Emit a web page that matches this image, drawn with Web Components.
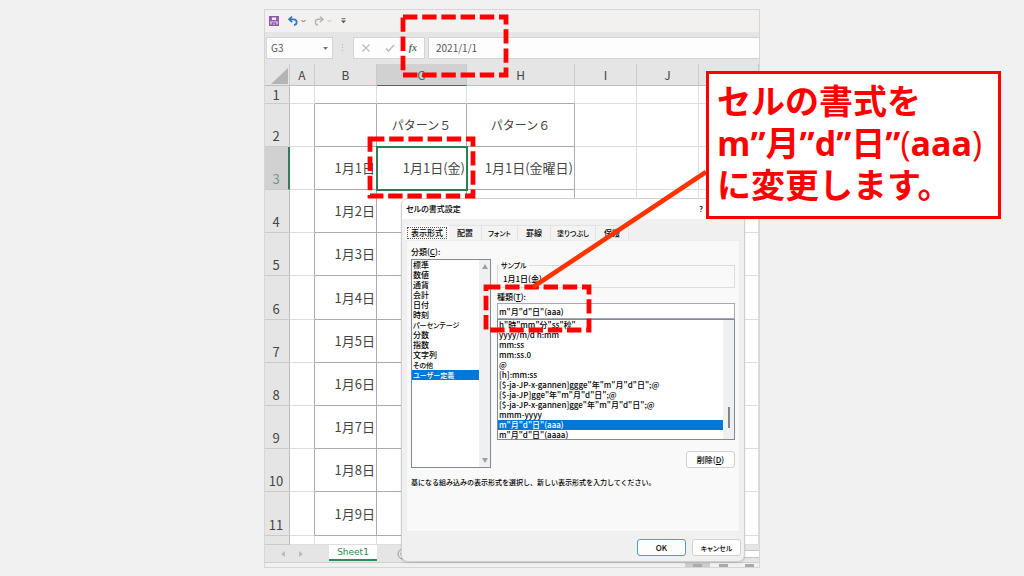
<!DOCTYPE html>
<html lang="ja">
<head>
<meta charset="utf-8">
<title>セルの書式設定</title>
<style>
  html, body { margin: 0; }
  body { background: #f1f1f1; color: #444; font: 13px/16px "Noto Sans CJK JP", sans-serif; }
</style>
</head>
<body>
<tutorial-slide>
  <xl-workbook>
    <xl-titlebar></xl-titlebar>
    <xl-formulabar cell="G3" value="2021/1/1"></xl-formulabar>
    <xl-grid></xl-grid>
    <xl-sheetbar></xl-sheetbar>
  </xl-workbook>
  <format-dialog slot="over"></format-dialog>
  <dash-mark slot="over" style="--x:137px;--y:6px;--w:107px;--h:62px"></dash-mark>
  <dash-mark slot="over" style="--x:104px;--y:128px;--w:107px;--h:61px"></dash-mark>
  <dash-mark slot="over" style="--x:220px;--y:276px;--w:107px;--h:47px"></dash-mark>
  <leader-line slot="over"></leader-line>
  <callout-box slot="over">セルの書式を<br>m”月”d”日”<span>(</span>aaa<span>)</span><br>に変更します。</callout-box>
</tutorial-slide>

<script>
const define = (name, html, setup) => customElements.define(name, class extends HTMLElement {
  constructor() {
    super();
    const t = document.createElement('template');
    t.innerHTML = '<style>*{box-sizing:border-box}</style>' + html;
    this.attachShadow({ mode: 'open' }).append(t.content.cloneNode(true));
  }
  connectedCallback() { if (setup) setup(this, this.shadowRoot); }
});

define('tutorial-slide', `
<style>
  :host { display: block; padding: 9px 264px 8px; overflow: hidden; }
  main { position: relative; min-width: 496px; }
</style>
<main><slot></slot><slot name="over"></slot></main>`);

define('xl-workbook', `
<style>
  :host { display: flex; flex-direction: column; border: 1px solid #d6d6d6; background: #e5e5e5; overflow: hidden; }
</style>
<slot></slot>`);

define('xl-titlebar', `
<style>
  :host { display: block; background: #f3f1ef; }
  div { display: flex; align-items: center; height: 22px; padding-left: 3px; }
  button { border: 0; padding: 0; background: none; display: flex; }
  .gap { margin-left: 7px; }
  .drop { margin-left: 2px; }
  .more { margin-left: 9px; }
</style>
<div>
  <button aria-label="上書き保存"><svg width="12" height="12" viewBox="0 0 12 12" fill="none" stroke="#8d57ad" stroke-width="1.4"><path d="M1.7 1.7h8.6v8.6H1.7zM3.2 1.7v4h5.600v-4M4.200 10.300V8h3.600v2.300"/></svg></button>
  <button class="gap" aria-label="元に戻す"><svg width="12" height="12" viewBox="0 0 12 12" fill="none" stroke="#2f79bd" stroke-width="1.7"><path d="M5 1.5L2 4.3l3.2 2.9M2 4.3h4.6c4 0 4 5.2.4 5.9"/></svg></button>
  <button class="drop" aria-label="元に戻す一覧"><svg width="5" height="4" viewBox="0 0 5 4" fill="none" stroke="#666"><path d="M.5 1l2 2 2-2"/></svg></button>
  <button class="gap" aria-label="やり直し"><svg width="12" height="12" viewBox="0 0 12 12" fill="none" stroke="#b5b5b5" stroke-width="1.5"><path d="M7 1.5l3 2.8-3.2 2.9M10 4.3H5.4c-4 0-4 5.2-.4 5.9"/></svg></button>
  <button class="drop" aria-label="やり直し一覧"><svg width="5" height="4" viewBox="0 0 5 4" fill="none" stroke="#bbb"><path d="M.5 1l2 2 2-2"/></svg></button>
  <button class="more" aria-label="ツールバーのユーザー設定"><svg width="5" height="6" viewBox="0 0 5 6"><path d="M.5 .7h4" stroke="#666"/><path d="M0 2.5h5L2.5 5.2z" fill="#555"/></svg></button>
</div>`);

define('xl-formulabar', `
<style>
  :host { display: block; }
  .bar { display: grid; grid-template-columns: 67px 14px 72px 1fr; column-gap: 3px; padding: 5px 0 5px 1px; }
  .box { background: #fdfdfd; border: 1px solid #d4d4d4; height: 22px; display: flex; align-items: center; min-width: 0; }
  input { border: 0; background: none; padding: 0; color: #555; width: 100%; min-width: 0; outline: 0; font: 10px/14px "Noto Sans CJK JP", sans-serif; }
  .name input { padding-left: 4px; }
  .name svg { flex: none; margin-right: 4px; }
  .dots { display: flex; align-items: center; justify-content: center; }
  .tools { justify-content: space-between; padding: 0 7px; }
  button { border: 0; background: none; padding: 0; display: flex; }
  .fx { font: italic bold 10px/14px "Liberation Serif", serif; color: #666; }
  .value { border-right: 0; padding-left: 7px; }
</style>
<div class="bar">
  <div class="box name"><input id="n" aria-label="名前ボックス"><svg width="5" height="3"><path d="M0 0h5L2.5 3z" fill="#777"/></svg></div>
  <div class="dots"><svg width="2" height="9" fill="#b0b0b0"><path d="M0 0h1v1H0zM0 3h1v1H0zM0 6h1v1H0z"/></svg></div>
  <div class="box tools">
    <button aria-label="キャンセル"><svg width="10" height="8" viewBox="0 0 10 8" stroke="#bcbcbc" stroke-width="1.2" fill="none"><path d="M1.5 .5l7 7m0-7l-7 7"/></svg></button>
    <button aria-label="入力"><svg width="10" height="8" viewBox="0 0 10 8" stroke="#bcbcbc" stroke-width="1.6" fill="none"><path d="M1 4.5l2.500 2.500L9 1"/></svg></button>
    <button class="fx" aria-label="関数の挿入">fx</button>
  </div>
  <div class="box value"><input id="v" aria-label="数式バー"></div>
</div>`, (el, root) => {
  root.getElementById('n').value = el.getAttribute('cell');
  root.getElementById('v').value = el.getAttribute('value');
});

define('xl-grid', `
<style>
  :host { display: block; }
  table { width: 100%; table-layout: fixed; border-collapse: separate; border-spacing: 0; background: #fff; }
  th, td { padding: 0; border-right: 1px solid #dedede; border-bottom: 1px solid #dedede; white-space: nowrap; overflow: hidden; }
  th { font-weight: 400; font-size: 12px; line-height: 16px; color: #444; background: #e5e5e5; }
  thead tr { height: 22px; }
  thead th { border-right-color: #cacaca; border-bottom-color: #bdbdbd; }
  thead th.on { background: #d1d1d1; border-bottom: 1px solid #2e7d55; color: #2e7d55; }
  thead svg { display: block; margin: 3px 1px 0 auto; }
  tbody tr { height: 43px; }
  tbody tr:nth-child(5n + 1) { height: 44px; }
  tbody tr.top { height: 18px; }
  tbody tr.last { height: 9px; }
  tbody th { vertical-align: bottom; font-size: 13px; border-right-color: #bdbdbd; border-bottom-color: #cacaca; padding: 0 2px 2px 0; }
  .top th { padding-bottom: 0; }
  tbody th.on { background: #d1d1d1; color: #6d9c84; border-right: 2px solid #2e7d55; padding-right: 1px; }
  td { text-align: right; padding-right: 1px; }
  td.f, .top td.t { border-bottom-color: #ababab; }
  td.f, td.l { border-right-color: #ababab; }
  td.h { text-align: center; padding: 0; font-size: 12px; }
  td.sel { outline: 2px solid #2e7d55; outline-offset: -1px; }
  col.s { width: 25px; } col.m { width: 62px; } col.g { width: 90px; } col.w { width: 108px; }
</style>
<table>
  <colgroup><col class="s"><col class="s"><col class="m"><col class="g"><col class="w"><col class="m"><col class="m"><col></colgroup>
  <thead><tr><th><svg width="17" height="16"><path d="M17 0v16H0z" fill="#b4b4b4"/></svg></th><th>A</th><th>B</th><th class="on">G</th><th>H</th><th>I</th><th>J</th><th>K</th></tr></thead>
  <tbody></tbody>
</table>`, (el, root) => {
  const body = root.querySelector('tbody');
  const blank = '<td></td><td></td><td></td>';
  let rows = '<tr class="top"><th>1</th><td></td><td class="t"></td><td class="t"></td><td class="t"></td>' + blank + '</tr>';
  rows += '<tr><th>2</th><td class="l"></td><td class="f"></td><td class="f h">パターン５</td><td class="f h">パターン６</td>' + blank + '</tr>';
  for (let n = 3; n <= 11; n++) {
    const first = n === 3;
    rows += '<tr><th' + (first ? ' class="on"' : '') + '>' + n + '</th><td class="l"></td><td class="f">1月' + (n - 2) + '日</td>' +
      '<td class="f' + (first ? ' sel' : '') + '">' + (first ? '1月1日(金)' : '') + '</td><td class="f">' + (first ? '1月1日(金曜日)' : '') + '</td>' + blank + '</tr>';
  }
  rows += '<tr class="last"><th></th><td></td><td></td><td></td><td></td>' + blank + '</tr>';
  body.innerHTML = rows;
});

define('xl-sheetbar', `
<style>
  :host { display: block; }
  .tabs { display: grid; grid-template-columns: 64px 48px 1fr; height: 18px; border-bottom: 1px solid #cfcfcf; }
  .arrows { display: flex; align-items: center; gap: 14px; padding-left: 16px; }
  button { border: 0; background: #fff; padding: 0; margin-bottom: 1px; border-bottom: 2px solid #2e8b57; color: #2e8b57; font: 500 9px/14px "DejaVu Sans", sans-serif; }
  .rest { display: flex; align-items: center; justify-content: space-between; padding-left: 20px; }
  .bar { width: 40px; height: 8px; background: #fff; border: 1px solid #c4c4c4; border-right: 0; }
  .status { height: 4px; background: #f1f1f1; display: flex; justify-content: flex-end; gap: 17px; padding: 1px 5px 0; }
  .status i { width: 9px; height: 3px; background: #aaa; }
  .status i:first-child { outline: 8px solid #cdcdcd; clip-path: inset(-1px -8px 0 -8px); }
</style>
<div class="tabs">
  <div class="arrows"><svg width="4" height="6"><path d="M4 0v6L0 3z" fill="#bbb"/></svg><svg width="4" height="6"><path d="M0 0v6l4-3z" fill="#bbb"/></svg></div>
  <button>Sheet1</button>
  <div class="rest"><svg width="12" height="12" fill="none" stroke="#999"><circle cx="6" cy="6" r="5"/><path d="M6 3v6M3 6h6"/></svg><span class="bar"></span></div>
</div>
<div class="status"><i></i><i></i><i></i></div>`);

define('list-box', `
<style>
  :host { display: block; background: #fff; border: 1px solid #83879a; overflow: hidden; }
  .wrap { display: grid; grid-template-columns: 1fr 11px; height: 100%; }
  ul { list-style: none; margin: 0; padding: 0; min-width: 0; }
  li { line-height: 10px; height: 10px; padding-left: 1px; white-space: nowrap; }
  li.kana { font-size: 7px; }
  li[aria-selected=true] { background: #0078d7; color: #fff; }
  .track { background: #f0f0f0; display: flex; flex-direction: column; justify-content: space-between; align-items: center; padding: 4px 0; }
  .thumb { width: 2px; height: 21px; background: #858585; margin: auto 0 8px; }
</style>
<div class="wrap"><ul role="listbox"></ul><div class="track"></div></div>`, (el, root) => {
  const ul = root.querySelector('ul');
  el.querySelectorAll('data').forEach(d => {
    const li = document.createElement('li');
    li.setAttribute('role', 'option');
    li.setAttribute('aria-selected', d.value === 'on');
    li.className = d.className;
    li.textContent = d.textContent;
    ul.append(li);
  });
  ul.setAttribute('aria-label', el.getAttribute('label'));
  root.querySelector('.track').innerHTML = el.hasAttribute('thumb') ? '<span class="thumb"></span>' :
    '<svg width="6" height="5"><path d="M0 5l3-5 3 5z" fill="#a0a0a0"/></svg><svg width="6" height="5"><path d="M0 0l3 5 3-5z" fill="#a0a0a0"/></svg>';
});

define('format-dialog', `
<style>
  :host { display: block; position: absolute; left: 137px; right: 15px; top: 189px; border: 1px solid #cfcfcf; border-radius: 7px; background: #f0f0f0;
    color: #000; overflow: hidden; font-size: 8px; font-weight: 500; line-height: 10px; font-feature-settings: "palt"; box-shadow: 0 1px 2px #0002; }
  header { display: flex; justify-content: space-between; align-items: center; background: #fff; height: 20px; padding: 0 41px 0 4px; }
  nav { display: flex; height: 21px; padding: 6px 3px 0; }
  nav button { border: 1px solid #e3e3e3; border-left: 0; border-bottom: 0; background: #f3f3f3; padding: 0 8px; }
  nav button.on { background: #f9f9f9; padding: 0 1px 0 2px; border-color: #f9f9f9; }
  nav button.on span { display: block; border: 1px dotted #555; padding: 0 3px; }
  button, input { font: inherit; font-feature-settings: inherit; color: inherit; white-space: nowrap; }
  button.kana, .kana { font-size: 7px; }
  nav button.kana { padding: 0 6px; }
  .page { margin: 0 4px; border: 1px solid #ececec; background: #f9f9f9; padding: 6px 4px 44px; }
  .cols { display: grid; grid-template-columns: 80px 1fr; column-gap: 6px; }
  .left { display: flex; flex-direction: column; gap: 2px; }
  .left list-box { flex: 1; }
  .right { display: flex; flex-direction: column; padding-top: 13px; min-width: 0; }
  fieldset { margin: 0; border: 1px solid #dcdcdc; padding: 4px 5px 3px; min-width: 0; }
  legend { padding: 0 2px; margin-left: -4px; }
  label { display: block; }
  .kind { margin: 4px 0 1px; }
  input { display: block; width: 100%; height: 16px; border: 1px solid #a8a8b0; background: #fff; padding: 0 1px; }
  .right list-box { height: 121px; }
  .act { border: 1px solid #d0d0d0; border-radius: 3px; background: #fdfdfd; width: 49px; height: 17px; padding: 0; }
  .del { align-self: flex-end; margin-top: 11px; }
  p { margin: 9px 0 0; white-space: nowrap; font-size: 7px; font-feature-settings: normal; }
  footer { display: flex; justify-content: flex-end; gap: 6px; padding: 7px 3px 5px; }
  .ok { border-color: #4a9bdc; }
</style>
<header><span>セルの書式設定</span><span>?</span></header>
<nav><button class="on"><span>表示形式</span></button><button>配置</button><button class="kana">フォント</button><button>罫線</button><button class="kana">塗りつぶし</button><button>保護</button></nav>
<div class="page">
  <div class="cols">
    <div class="left">
      <label>分類(<u>C</u>):</label>
      <list-box label="分類"><data>標準</data><data>数値</data><data>通貨</data><data>会計</data><data>日付</data><data>時刻</data><data class="kana">パーセンテージ</data><data>分数</data><data>指数</data><data>文字列</data><data class="kana">その他</data><data class="kana" value="on">ユーザー定義</data></list-box>
    </div>
    <div class="right">
      <fieldset><legend class="kana">サンプル</legend>1月1日(金)</fieldset>
      <label class="kind" for="kind">種類(<u>T</u>):</label>
      <input id="kind" value='m"月"d"日"(aaa)'>
      <list-box label="種類" thumb><data>h"時"mm"分"ss"秒"</data><data>yyyy/m/d h:mm</data><data>mm:ss</data><data>mm:ss.0</data><data>@</data><data>[h]:mm:ss</data><data>[$-ja-JP-x-gannen]ggge"年"m"月"d"日";@</data><data>[$-ja-JP]gge"年"m"月"d"日";@</data><data>[$-ja-JP-x-gannen]gge"年"m"月"d"日";@</data><data>mmm-yyyy</data><data value="on">m"月"d"日"(aaa)</data><data>m"月"d"日"(aaaa)</data></list-box>
      <button class="act del">削除(<u>D</u>)</button>
    </div>
  </div>
  <p>基になる組み込みの表示形式を選択し、新しい表示形式を入力してください。</p>
</div>
<footer><button class="act ok">OK</button><button class="act kana">キャンセル</button></footer>`);

define('dash-mark', `
<style>
  :host { display: block; position: absolute; left: var(--x); top: var(--y); width: var(--w); height: var(--h); padding: 2px; box-sizing: border-box; }
  svg { display: block; width: 100%; height: 100%; overflow: visible; }
</style>
<svg><rect width="100%" height="100%" fill="none" stroke="#f00" stroke-width="4.8" stroke-dasharray="14.4 4.8"/></svg>`);

define('leader-line', `
<style>
  :host { display: block; position: absolute; left: 269px; right: 54px; top: 163px; height: 115px; }
  svg { display: block; width: 100%; height: 100%; overflow: visible; }
</style>
<svg viewBox="0 0 173 115" preserveAspectRatio="none"><path d="M0 115L173 0" stroke="#ff3300" stroke-width="4.6"/></svg>`);

define('callout-box', `
<style>
  :host { display: block; position: absolute; right: -241px; top: 62px; width: 295px; box-sizing: border-box; border: 3px solid #f00; background: #fff;
    padding: 6px 8px 10px; color: #f00; white-space: nowrap; font: bold 34px/42px "Open Sans", "Noto Sans CJK JP", sans-serif; }
  ::slotted(span) { font-weight: 400; }
</style>
<slot></slot>`);
</script>
</body>
</html>
